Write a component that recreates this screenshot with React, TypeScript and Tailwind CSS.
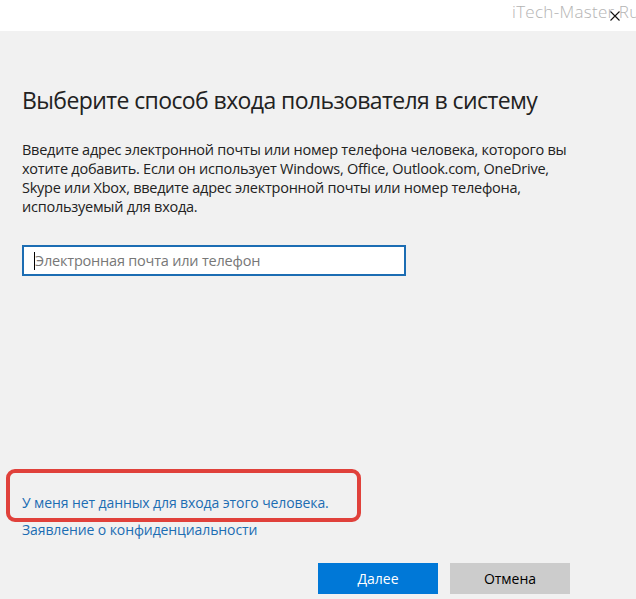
export default function App() {
  return (
    <div className="flex h-[599px] w-[636px] flex-col overflow-hidden bg-[#f1f1f1] font-['Open_Sans',sans-serif]">
      {/* Title bar */}
      <div className="relative h-[31px] shrink-0 bg-white">
        <span className="absolute left-[512px] top-[-1px] whitespace-nowrap text-[17px] font-light tracking-[0.3px] text-[#b4b4b4]">
          iTech-Master.Ru
        </span>
        <svg
          className="absolute left-[610px] top-[11px]"
          width="10"
          height="10"
          viewBox="0 0 10 10"
        >
          <path d="M0.5 0.5L9.5 9.5M9.5 0.5L0.5 9.5" stroke="#111" strokeWidth="1.1" />
        </svg>
      </div>

      {/* Content */}
      <div className="flex flex-1 flex-col px-[22px]">
        <h1 className="mt-[53px] text-[23px] leading-[32px] font-normal tracking-[-0.6px] text-[#222]">
          Выберите способ входа пользователя в систему
        </h1>
        <p className="mt-[24px] whitespace-nowrap text-[14.5px] leading-[19px] tracking-[-0.25px] text-[#222]">
          Введите адрес электронной почты или номер телефона человека, которого вы
          <br />
          хотите добавить. Если он использует Windows, Office, Outlook.com, OneDrive,
          <br />
          Skype или Xbox, введите адрес электронной почты или номер телефона,
          <br />
          используемый для входа.
        </p>
        <div className="mt-[29px] flex h-[31px] w-[384px] items-center border-2 border-[#1c6db3] bg-white pl-[10px]">
          <span className="h-[18px] w-px bg-black" />
          <span className="text-[14.5px] tracking-[-0.2px] text-[#777]">
            Электронная почта или телефон
          </span>
        </div>

        <div className="flex-1" />

        <div className="relative">
          <div className="pointer-events-none absolute left-[-16px] top-[-24px] h-[53px] w-[355px] rounded-[9px] border-4 border-[#e0413b]" />
          <a className="block text-[14px] leading-[20px] tracking-[-0.1px] text-[#1c6db3]">
            У меня нет данных для входа этого человека.
          </a>
          <a className="mt-[7px] block text-[14px] leading-[20px] tracking-[-0.1px] text-[#1c6db3]">
            Заявление о конфиденциальности
          </a>
        </div>

        <div className="mt-[23px] mb-[5px] flex justify-end gap-[12px] pr-[44px]">
          <button className="h-[31px] w-[120px] bg-[#0078d7] text-[14px] text-white">
            Далее
          </button>
          <button className="h-[31px] w-[120px] bg-[#cccccc] text-[14px] text-black">
            Отмена
          </button>
        </div>
      </div>
    </div>
  );
}
